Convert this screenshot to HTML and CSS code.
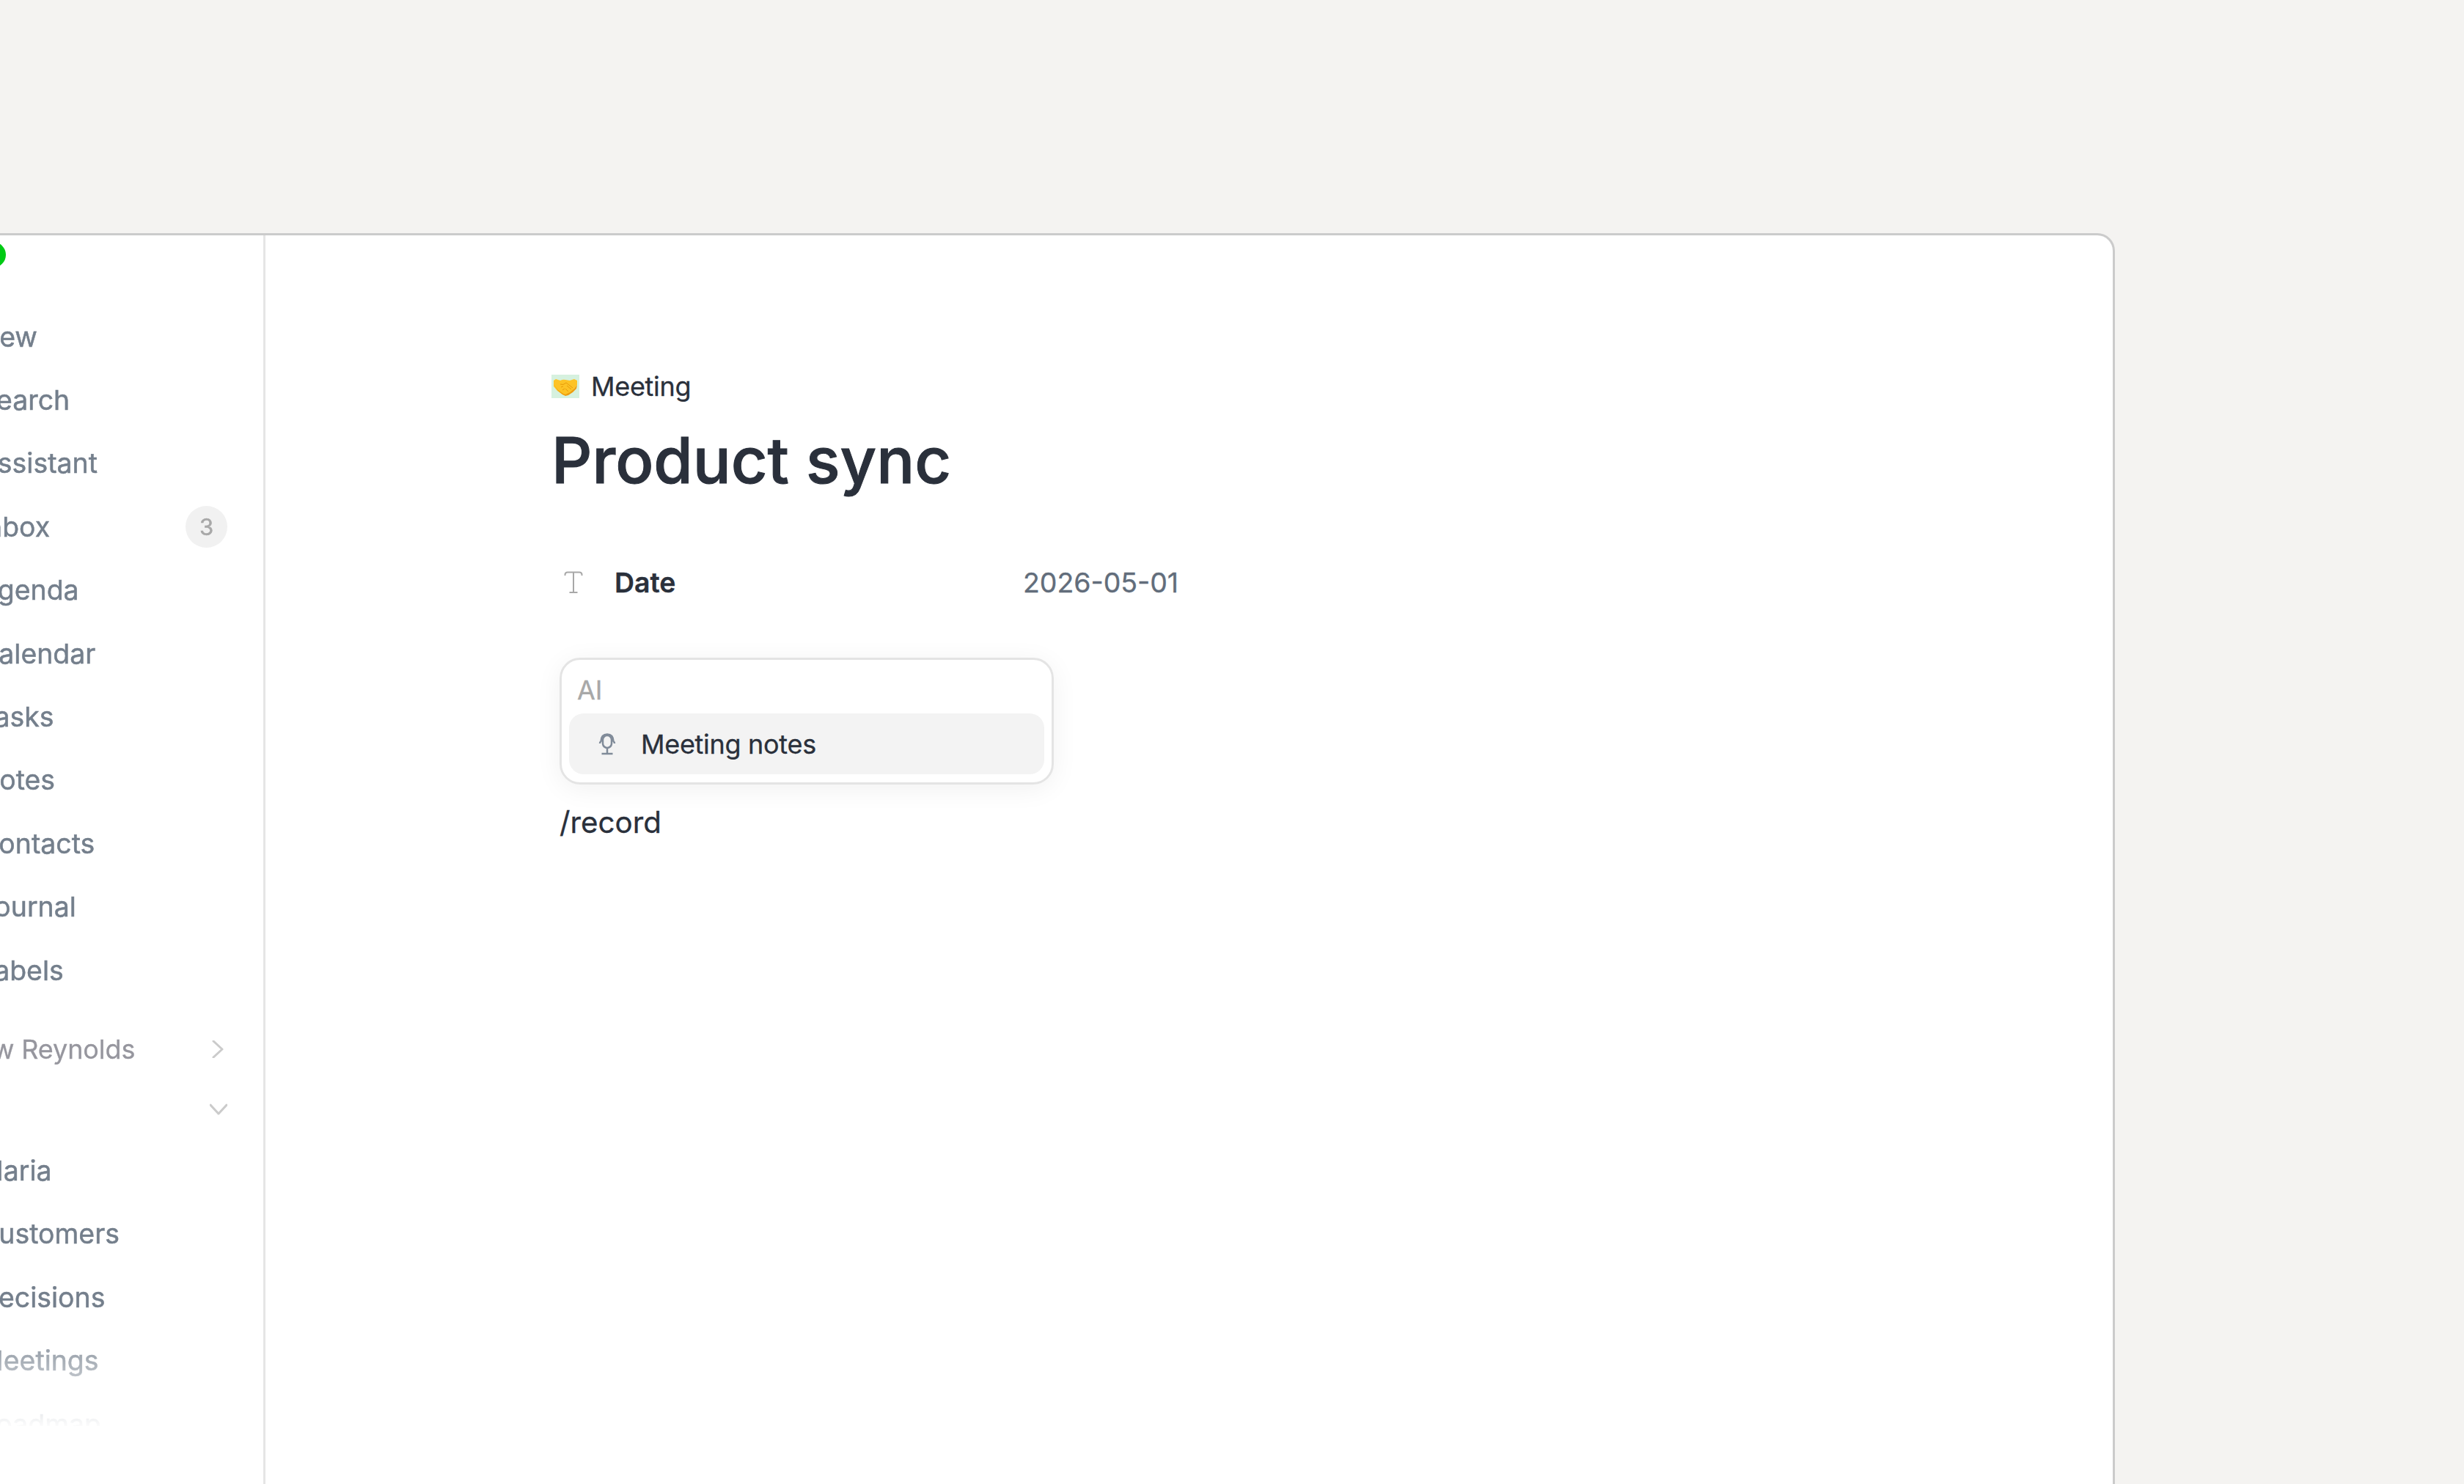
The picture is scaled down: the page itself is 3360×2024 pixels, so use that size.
FILE: index.html
```
<!DOCTYPE html>
<html lang="en">

<head>
    <meta charset="UTF-8">
    <meta name="viewport" content="width=device-width, initial-scale=1.0">
    <title>Product sync</title>
    <link rel="stylesheet" href="styles.css">
</head>

<body>

    <div class="window">
        <aside class="sidebar">
            <div class="traffic">
                <span class="dot"></span>
            </div>

            <nav class="nav">
                <a class="nav-item">New</a>
                <a class="nav-item">Search</a>
                <a class="nav-item">Assistant</a>
                <a class="nav-item">Inbox <span class="badge">3</span></a>
                <a class="nav-item">Agenda</a>
                <a class="nav-item">Calendar</a>
                <a class="nav-item">Tasks</a>
                <a class="nav-item">Notes</a>
                <a class="nav-item">Contacts</a>
                <a class="nav-item">Journal</a>
                <a class="nav-item">Labels</a>

                <div class="nav-section">
                    <span class="section-name">Andrew Reynolds</span>
                    <svg class="chevron" viewBox="0 0 24 24"><path d="M5 1l12 11L5 23" /></svg>
                </div>
                <div class="nav-section second">
                    <svg class="chevron" viewBox="0 0 24 24"><path d="M1 6l11 12L23 6" /></svg>
                </div>

                <a class="nav-item">Maria</a>
                <a class="nav-item">Customers</a>
                <a class="nav-item">Decisions</a>
                <a class="nav-item">Meetings</a>
                <a class="nav-item">Roadmap</a>
            </nav>
        </aside>

        <main class="content">
            <div class="type">
                <svg class="type-icon" viewBox="0 0 38 32">
                    <rect width="38" height="32" fill="#d6f1df" />
                    <path d="M3 8l3-2 6 2q4-2 7-1l6 1 6-2 4 2v6l-5 6-6 5-6 3-3-1-7-5-5-6z" fill="#fdc325" />
                    <path d="M3 13l6 8 7 5 3 1 6-3 6-5 4-5-1 5-5 5-6 4-4 1-4-2-6-5z" fill="#ee9d0c" />
                    <path d="M12 13q4 2 8-2l9 7M21 15l6 5M19 19l4 4M13 17l3-1M15 21l3-2" fill="none" stroke="#e89b0a" stroke-width="1" />
                </svg>
                <span>Meeting</span>
            </div>

            <h1>Product sync</h1>

            <div class="property">
                <svg class="text-icon" viewBox="0 0 26 32">
                    <path d="M1.500 7V6q0-3.500 3.500-3.500h16q3.500 0 3.500 3.500v1M13 2.500v27M7.500 30h11" />
                </svg>
                <span class="property-name">Date</span>
                <span class="property-value">2026-05-01</span>
            </div>

            <div class="menu">
                <div class="menu-label">AI</div>
                <div class="menu-item">
                    <svg class="mic-icon" viewBox="0 0 24 32">
                        <rect x="6" y="4" width="12" height="17" rx="6" />
                        <path d="M2 15q0-2 1.500-3Q4 2.500 12 2.500T20.500 12q1.500 1 1.500 3M12 21v8M4.500 29h15" />
                    </svg>
                    <span>Meeting notes</span>
                </div>
            </div>

            <p class="editor-line">/record</p>
        </main>
    </div>

</body>

</html>
```
FILE: styles.css
```
* {
    box-sizing: border-box;
}

body {
    margin: 0;
    height: 2024px;
    overflow: hidden;
    background-color: #f4f3f1;
    font-family: Inter, "Liberation Sans", sans-serif;
    color: #2a303b;
    -webkit-text-stroke: 0.3px currentColor;
}

/* the window runs off the left and bottom edges */
.window {
    display: flex;
    width: 3084px;
    height: 1706px;
    margin: 318px 0 0 -200px;
    background-color: #fff;
    border: 3px solid #cbcbcb;
    border-bottom: none;
    border-radius: 24px 24px 0 0;
}

.sidebar {
    width: 559px;
    border-right: 3px solid #e5e5e5;
}

.traffic {
    display: flex;
    height: 95px;
    padding: 9px 0 0 170px;
}

.dot {
    width: 35px;
    height: 35px;
    border-radius: 50%;
    background-color: #00ca14;
}

.nav {
    height: 1529px;
    padding-right: 49px;
    padding-left: 168px;
    overflow: hidden;
    -webkit-mask-image: linear-gradient(to bottom, #000 1385px, transparent 1533px);
    mask-image: linear-gradient(to bottom, #000 1385px, transparent 1533px);
}

.nav-item {
    display: flex;
    align-items: center;
    justify-content: space-between;
    height: 86.4px;
    font-size: 37.44px;
    color: #747f8c;
    -webkit-text-stroke-width: 0.5px;
}

.badge {
    width: 57px;
    height: 57px;
    border-radius: 50%;
    background-color: #f1f1f1;
    color: #a8a8a8;
    font-size: 31px;
    line-height: 57px;
    text-align: center;
}

.nav-section {
    display: flex;
    align-items: center;
    justify-content: space-between;
    height: 82px;
    margin-top: 24px;
    font-size: 36px;
    letter-spacing: -0.1px;
    color: #96969e;
}

.nav-section.second {
    justify-content: flex-end;
    height: 81px;
    margin-top: 0;
}

.section-name {
    margin-left: -82px;
}

.chevron {
    width: 24px;
    height: 24px;
    fill: none;
    stroke: #cbcbcb;
    stroke-width: 3;
    stroke-linecap: round;
    stroke-linejoin: round;
}

.content {
    padding: 184px 0 0 390px;
}

.type {
    display: flex;
    align-items: center;
    gap: 16px;
    height: 44px;
    font-size: 36px;
    letter-spacing: -0.3px;
}

.type-icon {
    width: 38px;
    height: 32px;
}

h1 {
    margin: 24px 0 0;
    font-size: 86.4px;
    font-weight: 500;
    line-height: 110px;
    -webkit-text-stroke-width: 1px;
}

.property {
    display: flex;
    align-items: center;
    height: 60px;
    margin-top: 81px;
    padding-left: 17px;
    font-size: 37.44px;
}

.text-icon {
    width: 26px;
    height: 32px;
    fill: none;
    stroke: #a8a8a8;
    stroke-width: 2;
}

.property-name {
    width: 557px;
    margin-left: 43px;
    font-weight: 600;
}

.property-value {
    color: #626d7b;
}

.menu {
    width: 674px;
    height: 173px;
    margin: 73px 0 0 11px;
    padding: 10px;
    border: 3px solid #e4e4e4;
    border-radius: 28px;
    box-shadow: 0 6px 36px rgba(0, 0, 0, 0.06);
}

.menu-label {
    height: 63px;
    padding: 6px 0 0 11px;
    font-size: 36px;
    line-height: 50px;
    color: #a8a8a8;
}

.menu-item {
    display: flex;
    align-items: center;
    gap: 34px;
    height: 83px;
    padding-left: 40px;
    border-radius: 20px;
    background-color: #f3f3f3;
    font-size: 36px;
    letter-spacing: -0.3px;
}

.mic-icon {
    width: 24px;
    height: 32px;
    fill: none;
    stroke: #808b99;
    stroke-width: 2.5;
}

.editor-line {
    margin: 26px 0 0 11px;
    font-size: 40.3px;
    line-height: 52px;
}
```
